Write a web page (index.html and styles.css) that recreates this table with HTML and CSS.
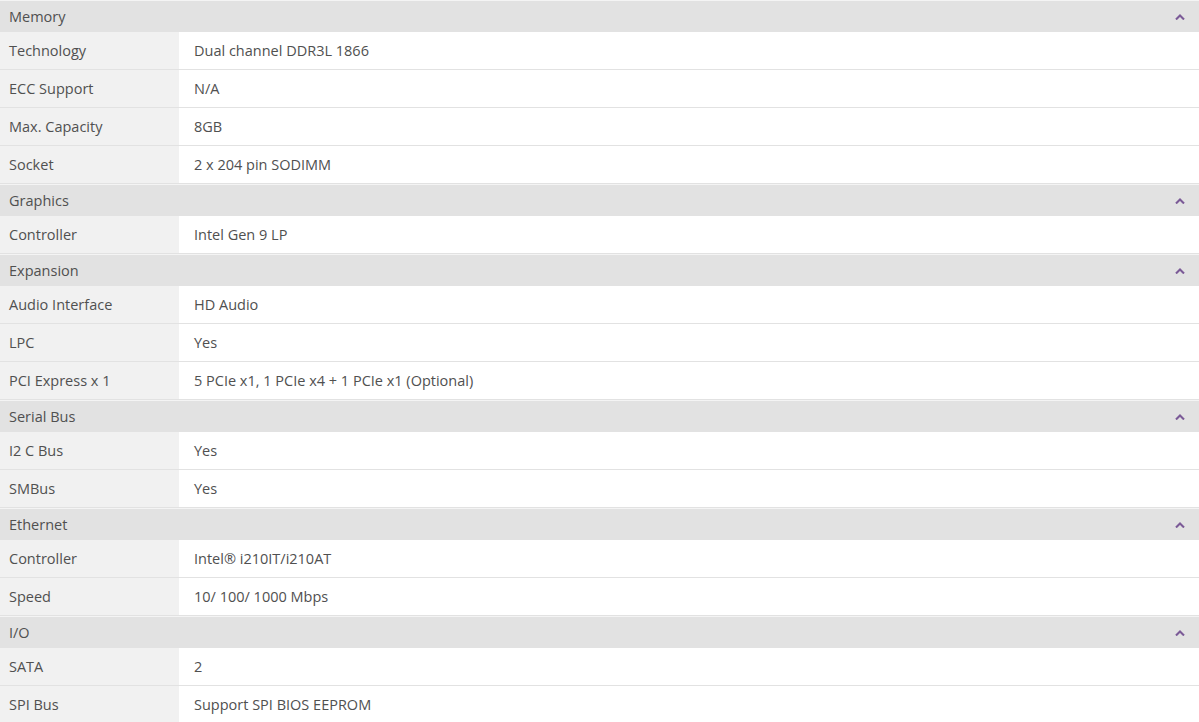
FILE: index.html
```html
<!DOCTYPE html>
<html>
<head>
<meta charset="utf-8">
<link rel="stylesheet" href="styles.css">
</head>
<body>
<div class="specs">
  <section class="group">
    <div class="group-head"><span>Memory</span><svg class="chev" viewBox="0 0 10 6" width="10" height="6"><path d="M1 5.5 L5 1.5 L9 5.5" fill="none" stroke="#7b5a97" stroke-width="2.1"/></svg></div>
    <div class="row"><div class="k">Technology</div><div class="v">Dual channel DDR3L 1866</div></div>
    <div class="row"><div class="k">ECC Support</div><div class="v">N/A</div></div>
    <div class="row"><div class="k">Max. Capacity</div><div class="v">8GB</div></div>
    <div class="row"><div class="k">Socket</div><div class="v">2 x 204 pin SODIMM</div></div>
  </section>
  <section class="group">
    <div class="group-head"><span>Graphics</span><svg class="chev" viewBox="0 0 10 6" width="10" height="6"><path d="M1 5.5 L5 1.5 L9 5.5" fill="none" stroke="#7b5a97" stroke-width="2.1"/></svg></div>
    <div class="row"><div class="k">Controller</div><div class="v">Intel Gen 9 LP</div></div>
  </section>
  <section class="group">
    <div class="group-head"><span>Expansion</span><svg class="chev" viewBox="0 0 10 6" width="10" height="6"><path d="M1 5.5 L5 1.5 L9 5.5" fill="none" stroke="#7b5a97" stroke-width="2.1"/></svg></div>
    <div class="row"><div class="k">Audio Interface</div><div class="v">HD Audio</div></div>
    <div class="row"><div class="k">LPC</div><div class="v">Yes</div></div>
    <div class="row"><div class="k">PCI Express x 1</div><div class="v">5 PCIe x1, 1 PCIe x4 + 1 PCIe x1 (Optional)</div></div>
  </section>
  <section class="group">
    <div class="group-head"><span>Serial Bus</span><svg class="chev" viewBox="0 0 10 6" width="10" height="6"><path d="M1 5.5 L5 1.5 L9 5.5" fill="none" stroke="#7b5a97" stroke-width="2.1"/></svg></div>
    <div class="row"><div class="k">I2 C Bus</div><div class="v">Yes</div></div>
    <div class="row"><div class="k">SMBus</div><div class="v">Yes</div></div>
  </section>
  <section class="group">
    <div class="group-head"><span>Ethernet</span><svg class="chev" viewBox="0 0 10 6" width="10" height="6"><path d="M1 5.5 L5 1.5 L9 5.5" fill="none" stroke="#7b5a97" stroke-width="2.1"/></svg></div>
    <div class="row"><div class="k">Controller</div><div class="v">Intel® i210IT/i210AT</div></div>
    <div class="row"><div class="k">Speed</div><div class="v">10/ 100/ 1000 Mbps</div></div>
  </section>
  <section class="group">
    <div class="group-head"><span>I/O</span><svg class="chev" viewBox="0 0 10 6" width="10" height="6"><path d="M1 5.5 L5 1.5 L9 5.5" fill="none" stroke="#7b5a97" stroke-width="2.1"/></svg></div>
    <div class="row"><div class="k">SATA</div><div class="v">2</div></div>
    <div class="row"><div class="k">SPI Bus</div><div class="v">Support SPI BIOS EEPROM</div></div>
  </section>
</div>
</body>
</html>
```
FILE: styles.css
```css
html, body {
  margin: 0;
  padding: 0;
  background: #ffffff;
}
body {
  font-family: "Open Sans", "Noto Sans", sans-serif;
  font-size: 14.5px;
  color: #505050;
}
.specs {
  width: 1199px;
  display: flex;
  flex-direction: column;
}
.group {
  border-top: 1px solid #f4f4f4;
  display: flex;
  flex-direction: column;
}
.group-head {
  height: 31px;
  background: #e2e2e2;
  display: flex;
  align-items: center;
  justify-content: space-between;
  padding: 0 14px 0 9px;
}
.chev {
  display: block;
  margin-top: 1px;
}
.row {
  display: flex;
  height: 37px;
  border-bottom: 1px solid #e2e2e2;
}
.k {
  width: 170px;
  flex: none;
  background: #f1f1f1;
  padding-left: 9px;
  display: flex;
  align-items: center;
}
.v {
  flex: 1;
  padding-left: 15px;
  display: flex;
  align-items: center;
}
```
